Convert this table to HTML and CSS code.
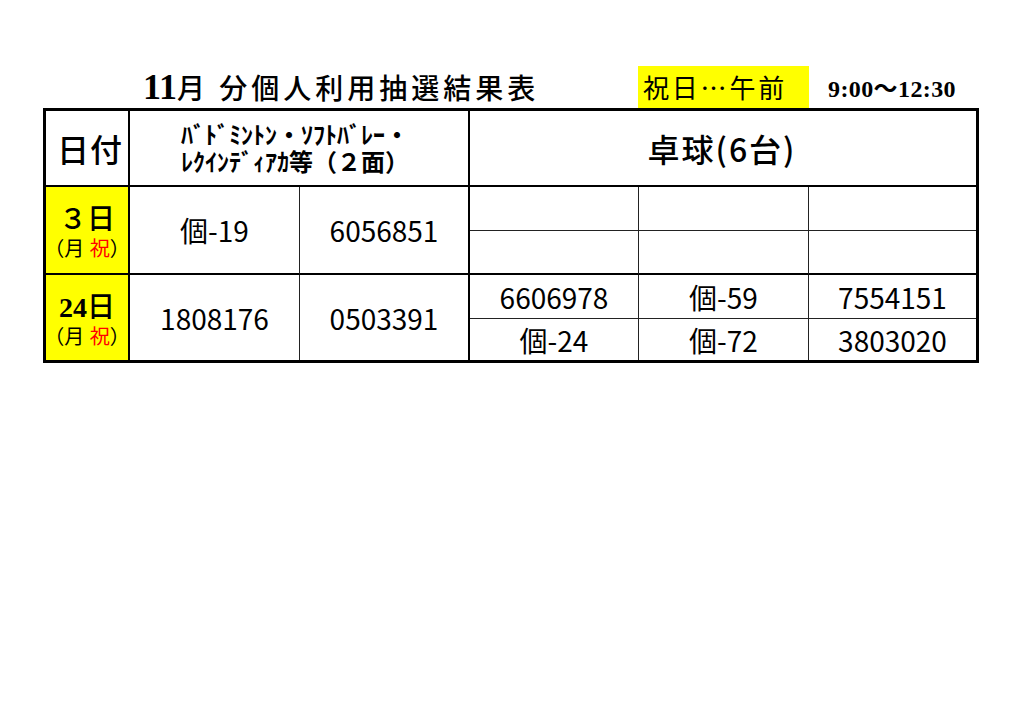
FILE: index.html
```html
<!DOCTYPE html>
<html lang="ja">
<head>
<meta charset="utf-8">
<title>11月 分個人利用抽選結果表</title>
<link rel="stylesheet" href="styles.css">
</head>
<body>
<div class="page">
  <div class="top">
    <h1 class="title"><span class="num">11</span>月 分個人利用抽選結果表</h1>
    <div class="note">祝日…午前</div>
    <div class="time">9:00〜12:30</div>
  </div>
  <div class="sheet">
    <div class="cell h-date">日付</div>
    <div class="cell h-bad"><span>ﾊﾞﾄﾞﾐﾝﾄﾝ・ｿﾌﾄﾊﾞﾚｰ・</span><span>ﾚｸｲﾝﾃﾞｨｱｶ等（２面）</span></div>
    <div class="cell h-tt">卓球(6台)</div>

    <div class="cell date g1"><span class="day">３日</span><span class="dow">（月 <em>祝</em>）</span></div>
    <div class="cell big c2 g1">個-19</div>
    <div class="cell big c3 g1">6056851</div>
    <div class="cell sub r2 c4"></div>
    <div class="cell sub r2 c5"></div>
    <div class="cell sub r2 c6"></div>
    <div class="cell sub r3 c4"></div>
    <div class="cell sub r3 c5"></div>
    <div class="cell sub r3 c6"></div>

    <div class="cell date g2"><span class="day"><span class="num">24</span>日</span><span class="dow">（月 <em>祝</em>）</span></div>
    <div class="cell big c2 g2">1808176</div>
    <div class="cell big c3 g2">0503391</div>
    <div class="cell sub r4 c4">6606978</div>
    <div class="cell sub r4 c5">個-59</div>
    <div class="cell sub r4 c6">7554151</div>
    <div class="cell sub r5 c4">個-24</div>
    <div class="cell sub r5 c5">個-72</div>
    <div class="cell sub r5 c6">3803020</div>
  </div>
</div>
</body>
</html>
```
FILE: styles.css
```css
html, body {
  margin: 0;
  padding: 0;
  background: #fff;
  color: #000;
  font-family: "Noto Sans CJK JP", "Noto Sans", sans-serif;
}

.page {
  padding: 66px 0 0 43px;
}

.top {
  display: flex;
  align-items: flex-start;
  width: 936px;
  height: 42px;
}

.title {
  margin: 0 0 0 100px;
  width: 495px;
  font-size: 28px;
  font-weight: 500;
  line-height: 42px;
  letter-spacing: 4px;
  white-space: nowrap;
}

.title .num {
  font-family: "Liberation Serif", serif;
  font-weight: 700;
  font-size: 36px;
  letter-spacing: 0;
}

.note {
  width: 171px;
  height: 42px;
  box-sizing: border-box;
  padding-left: 5px;
  background: #ffff00;
  font-size: 26px;
  line-height: 42px;
  letter-spacing: 2.8px;
  white-space: nowrap;
}

.time {
  margin-left: 19px;
  padding-top: 2px;
  font-family: "Liberation Serif", "Noto Sans CJK JP", serif;
  font-weight: 700;
  font-size: 24px;
  line-height: 42px;
  letter-spacing: 0.4px;
  white-space: nowrap;
}

.sheet {
  display: grid;
  width: 936px;
  box-sizing: border-box;
  border: 3px solid #000;
  grid-template-columns: 84px 170px 170px 169px 170px 167px;
  grid-template-rows: 76px 44px 44px 44px 41px;
}

.cell {
  box-sizing: border-box;
  display: flex;
  align-items: center;
  justify-content: center;
  border-color: #000;
  border-style: solid;
  border-width: 0;
  white-space: nowrap;
}

.h-date {
  grid-column: 1;
  grid-row: 1;
  border-right-width: 2px;
  border-bottom-width: 2px;
  font-size: 32px;
  font-weight: 500;
  letter-spacing: 1px;
  padding-left: 6px;
}

.h-bad {
  grid-column: 2 / 4;
  grid-row: 1;
  border-right-width: 2px;
  border-bottom-width: 2px;
  flex-direction: column;
  font-family: "Liberation Sans", "Noto Sans CJK JP", sans-serif;
  font-size: 24px;
  font-weight: 700;
  line-height: 27px;
  padding: 1px 8px 0 0;
}

.h-tt {
  grid-column: 4 / 7;
  grid-row: 1;
  border-bottom-width: 2px;
  font-size: 32px;
  font-weight: 500;
  letter-spacing: 2px;
  padding-right: 2px;
}

.g1 { grid-row: 2 / 4; border-bottom-width: 2px; }
.g2 { grid-row: 4 / 6; }

.date {
  grid-column: 1;
  border-right-width: 2px;
  background: #ffff00;
  flex-direction: column;
  padding-top: 5px;
}

.date .day {
  font-family: "Liberation Serif", "Noto Sans CJK JP", serif;
  font-size: 28px;
  font-weight: 500;
  line-height: 31px;
}

.date .day .num {
  font-weight: 700;
}

.date .dow {
  font-family: "Liberation Sans", "Noto Sans CJK JP", sans-serif;
  font-size: 20px;
  line-height: 23px;
  margin-top: 3px;
}

.date .dow em {
  font-style: normal;
  color: #ff0000;
}

.big, .sub {
  font-size: 28px;
}

.c2 { grid-column: 2; border-right: 1px solid #222; }
.c3 { grid-column: 3; border-right-width: 2px; }
.c4 { grid-column: 4; border-right: 1px solid #222; }
.c5 { grid-column: 5; border-right: 1px solid #222; }
.c6 { grid-column: 6; }

.r2 { grid-row: 2; border-bottom: 1px solid #222; }
.r3 { grid-row: 3; border-bottom: 2px solid #000; }
.r4 { grid-row: 4; border-bottom: 1px solid #222; }
.r5 { grid-row: 5; }
```
